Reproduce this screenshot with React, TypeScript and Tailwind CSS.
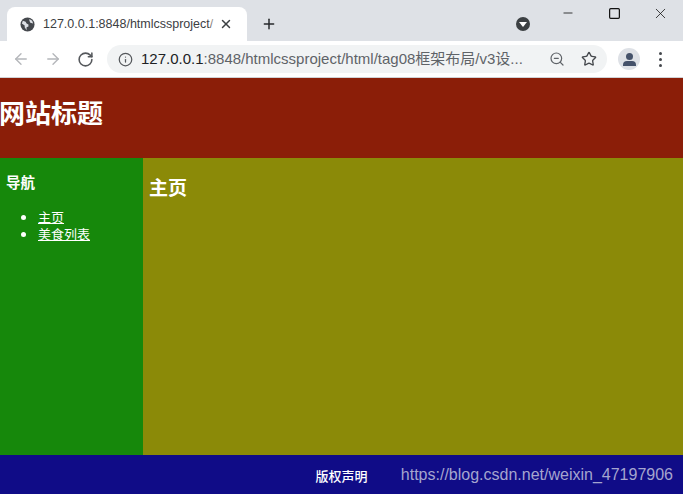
import { ArrowLeft, ArrowRight, RotateCw, Info, ZoomOut, Star, X, Plus, Minus, Square } from "lucide-react";

const cjk = "font-['Liberation_Sans','Noto_Sans_CJK_SC',sans-serif]";

function TabStrip() {
  return (
    <div className="h-[41px] bg-[#dee1e6] flex items-end pl-[7px] relative">
      <div className="w-[240px] h-[34px] bg-white rounded-t-[8px] flex items-center pl-[13px]">
        <svg width="15" height="15" viewBox="0 0 16 16" className="shrink-0">
          <circle cx="8" cy="8" r="7.5" fill="#45484d" />
          <path d="M3 4l3 1 1 2 2 1v2l-2 1v3L5 11V9L2 7zM10 2l3 2 1 3-3-1-1-2z" fill="#dee1e6" />
        </svg>
        <span className="relative ml-[8px] w-[175px] overflow-hidden whitespace-nowrap text-[12.5px] text-[#3c4043] font-['Liberation_Sans',sans-serif]">
          127.0.0.1:8848/htmlcssproject/
          <span className="absolute right-0 top-0 bottom-0 w-[10px] bg-gradient-to-r from-transparent to-white" />
        </span>
        <X size={14} strokeWidth={2.5} className="ml-[1px] text-[#3c4043]" />
      </div>
      <Plus size={16} strokeWidth={2.2} className="ml-[14px] mb-[9px] text-[#27292c]" />
      <div className="ml-[239px] mb-[10px] w-[14px] h-[14px] rounded-full bg-[#3c4043] flex items-center justify-center">
        <div className="w-0 h-0 border-x-[4px] border-x-transparent border-t-[5px] border-t-white" />
      </div>
      <div className="absolute right-0 top-0 flex items-center text-[#111]">
        <div className="w-[46px] h-[26px] flex items-center justify-center">
          <Minus size={14} strokeWidth={1.4} />
        </div>
        <div className="w-[46px] h-[26px] flex items-center justify-center">
          <Square size={13} strokeWidth={1.2} absoluteStrokeWidth />
        </div>
        <div className="w-[46px] h-[26px] flex items-center justify-center">
          <X size={17} strokeWidth={1.1} />
        </div>
      </div>
    </div>
  );
}

function Toolbar() {
  return (
    <div className="h-[37px] bg-white border-b border-[#d0d2d6] flex items-center">
      <ArrowLeft size={18} strokeWidth={1.8} className="ml-[12px] text-[#b4b6ba]" />
      <ArrowRight size={18} strokeWidth={1.8} className="ml-[14px] text-[#b4b6ba]" />
      <RotateCw size={17} strokeWidth={2.2} className="ml-[15px] text-[#55585c]" />
      <div className="ml-[13px] w-[500px] h-[28px] bg-[#f1f3f4] rounded-full flex items-center pl-[11px]">
        <Info size={15} strokeWidth={2} className="text-[#55585c] shrink-0" />
        <span className={`ml-[8px] w-[405px] whitespace-nowrap overflow-hidden text-[15px] text-[#5f6368] ${cjk}`}>
          <span className="text-[#202124]">127.0.0.1</span>:8848/htmlcssproject/html/tag08框架布局/v3设...
        </span>
        <ZoomOut size={16} strokeWidth={1.8} className="ml-[3px] text-[#5f6368]" />
        <Star size={16} strokeWidth={2} className="ml-[16px] text-[#45484d]" />
      </div>
      <div className="ml-[11px] w-[22px] h-[22px] rounded-full bg-[#dee1e6] flex flex-col items-center justify-center">
        <div className="w-[7px] h-[7px] rounded-full bg-[#45526a]" />
        <div className="w-[13px] h-[5px] mt-[1px] rounded-t-[4px] bg-[#45526a]" />
      </div>
      <div className="ml-[19px] flex flex-col gap-[3px]">
        <div className="w-[3px] h-[3px] rounded-full bg-[#45484d]" />
        <div className="w-[3px] h-[3px] rounded-full bg-[#45484d]" />
        <div className="w-[3px] h-[3px] rounded-full bg-[#45484d]" />
      </div>
    </div>
  );
}

export default function App() {
  return (
    <div className={`w-[683px] h-[494px] flex flex-col overflow-hidden relative ${cjk}`}>
      <TabStrip />
      <Toolbar />
      <div className="h-[80px] bg-[#8b1e08] flex items-center">
        <h1 className="text-[26px] font-bold text-white leading-none -mt-[8px] -ml-[1px]">网站标题</h1>
      </div>
      <div className="flex h-[297px]">
        <div className="w-[143px] bg-[#16880b] text-white pl-[6px]">
          <h3 className="text-[14.5px] font-bold mt-[17px] leading-[17px]">导航</h3>
          <ul className="mt-[17px] pl-[15px] text-[13px] leading-[17px]">
            <li className="flex items-center gap-[12px]">
              <span className="w-[5px] h-[5px] rounded-full bg-white" />
              <a className="underline">主页</a>
            </li>
            <li className="flex items-center gap-[12px]">
              <span className="w-[5px] h-[5px] rounded-full bg-white" />
              <a className="underline">美食列表</a>
            </li>
          </ul>
        </div>
        <div className="flex-1 bg-[#8b8a08] text-white pl-[6px]">
          <h2 className="text-[19px] font-bold mt-[20px] leading-[22px]">主页</h2>
        </div>
      </div>
      <div className="flex-1 bg-[#100c87] flex items-center justify-center text-white text-[13px]">
        <span className="mt-[5px] font-medium">版权声明</span>
      </div>
      <span className="absolute right-[10px] top-[465px] text-[16px] leading-[20px] text-[#a5a5cf]">
        https://blog.csdn.net/weixin_47197906
      </span>
    </div>
  );
}
